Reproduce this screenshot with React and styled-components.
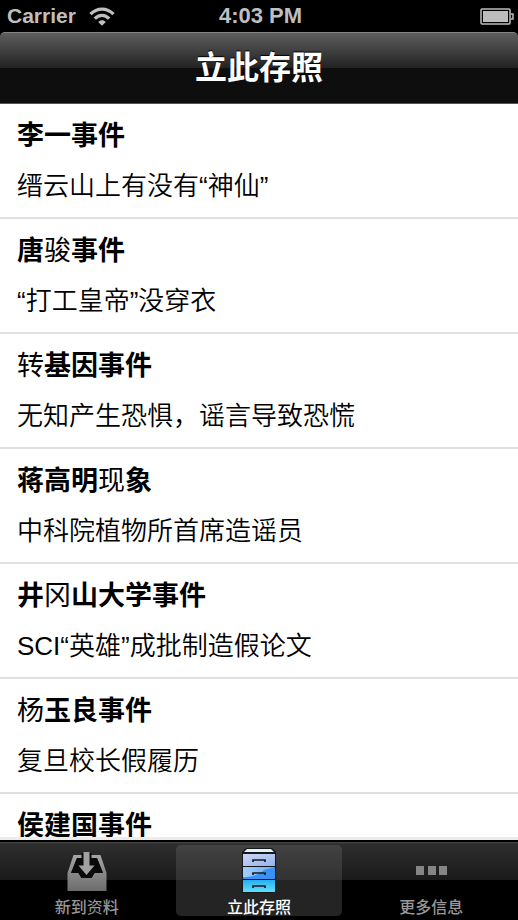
import styled, { createGlobalStyle } from 'styled-components';

const events = [
  { title: '李一事件', thin: '', desc: '缙云山上有没有“神仙”' },
  { title: '唐骏事件', thin: '骏', desc: '“打工皇帝”没穿衣' },
  { title: '转基因事件', thin: '转', desc: '无知产生恐惧，谣言导致恐慌' },
  { title: '蒋高明现象', thin: '现', desc: '中科院植物所首席造谣员' },
  { title: '井冈山大学事件', thin: '冈', desc: 'SCI“英雄”成批制造假论文' },
  { title: '杨玉良事件', thin: '杨', desc: '复旦校长假履历' },
  { title: '侯建国事件', thin: '', desc: '' },
];

const WifiIcon = () => (
  <svg width="26" height="19" viewBox="0 0 26 19" fill="none" stroke="#bfbfbf" strokeWidth="3.2" aria-hidden="true">
    <path d="M1.500 7.200C8 .4 18 .4 24.500 7.200" />
    <path d="M5.800 11.700C10 7.200 16 7.200 20.200 11.700" />
    <path d="M13 18.800L9.200 15C11.300 12.700 14.700 12.700 16.800 15Z" fill="#bfbfbf" stroke="none" />
  </svg>
);

const BatteryIcon = () => (
  <svg width="34" height="17" viewBox="0 0 34 17" aria-hidden="true">
    <rect x="1" y="1" width="29" height="15" rx="1" fill="none" stroke="#bdbdbd" strokeWidth="1.500" />
    <rect x="3" y="3" width="25" height="11" fill="#bdbdbd" />
    <path d="M30.500 6H33V11H30.500" fill="none" stroke="#bdbdbd" strokeWidth="1.500" />
  </svg>
);

const InboxIcon = () => (
  <svg width="40" height="40" viewBox="0 0 40 40" aria-hidden="true">
    <defs>
      <linearGradient id="inbox" x1="0" y1="0" x2="0" y2="1">
        <stop offset="0" stopColor="#a6a6a6" />
        <stop offset="1" stopColor="#6c6c6c" />
      </linearGradient>
    </defs>
    <path
      fill="url(#inbox)"
      fillRule="evenodd"
      d="M6.500 4H33.500L39.500 22V40H.5V22ZM10 7L4 22H11.500L14.500 27H24.500L27.500 22H36L30 7Z"
    />
    <path d="M10 7L4 22H11.500L14.500 27H24.500L27.500 22H36L30 7Z" fill="#0a0a0a" />
    <path d="M14.500 2V14H8.500L19.500 26L30.500 14H24.500V2Z" fill="#0a0a0a" />
    <path fill="#a0a0a0" d="M16.500 1H22.500V14.500H27.500L19.500 24L11.500 14.500H16.500Z" />
  </svg>
);

const CabinetIcon = () => (
  <svg width="40" height="46" viewBox="0 0 40 46" aria-hidden="true">
    <defs>
      <linearGradient id="drawer1" x1="0" y1="0" x2="1" y2="1">
        <stop offset="0" stopColor="#cdd6f4" />
        <stop offset="1" stopColor="#93b4ee" />
      </linearGradient>
      <linearGradient id="drawer2" x1="0" y1="0" x2="1" y2="0">
        <stop offset="0" stopColor="#a5cdf8" />
        <stop offset="1" stopColor="#68aef8" />
      </linearGradient>
      <linearGradient id="drawer3" x1="0" y1="0" x2="0" y2="1">
        <stop offset="0" stopColor="#29aef0" />
        <stop offset="1" stopColor="#61e0fb" />
      </linearGradient>
    </defs>
    <path d="M7 0H33L37 4V45H3V4Z" fill="#151719" />
    <path d="M8 1H32L35 4H5Z" fill="#dff3fa" />
    <rect x="4" y="6" width="32" height="12" fill="url(#drawer1)" />
    <rect x="4" y="19" width="32" height="12" fill="url(#drawer2)" />
    <path d="M4 31V29C14 29 21 26 25 22L36 19V31Z" fill="#3a90f3" />
    <rect x="4" y="32" width="32" height="12" fill="url(#drawer3)" />
    <path d="M14 14V12H26V14M14 27V25H26V27M14 40V38H26V40" fill="none" stroke="#171b20" strokeWidth="1.700" />
  </svg>
);

const MoreIcon = () => (
  <svg width="34" height="12" viewBox="0 0 34 12" aria-hidden="true">
    <path d="M2 1H10V10H2ZM14 1H22V10H14ZM25 1H33V10H25Z" fill="#858585" />
  </svg>
);

const tabs = [
  { label: '新到资料', thin: '资', icon: <InboxIcon /> },
  { label: '立此存照', thin: '', icon: <CabinetIcon />, active: true },
  { label: '更多信息', thin: '', icon: <MoreIcon /> },
];

// characters listed in thin are drawn in the regular weight
const MixedText = ({ text, thin }) =>
  [...text].map((char, i) => (thin.includes(char) ? <Thin key={i}>{char}</Thin> : char));

const App = () => {
  return <Screen lang="zh-CN">
    <GlobalStyle />
    <StatusBar>
      <Carrier>Carrier <WifiIcon /></Carrier>
      <time>4:03 PM</time>
      <Battery><BatteryIcon /></Battery>
    </StatusBar>
    <Header>
      <h1>立此存照</h1>
    </Header>
    <List>
      {events.map(({ title, thin, desc }) => (
        <Row key={title}>
          <a href="#event">
            <h2><MixedText text={title} thin={thin} /></h2>
            <p>{desc}</p>
          </a>
        </Row>
      ))}
    </List>
    <TabBar>
      {tabs.map(({ label, thin, icon, active }) => (
        <Tab key={label} type="button" $active={active} aria-current={active ? 'page' : undefined}>
          <TabIcon>{icon}</TabIcon>
          <span><MixedText text={label} thin={thin} /></span>
        </Tab>
      ))}
    </TabBar>
  </Screen>
}

const GlobalStyle = createGlobalStyle`
* {
  box-sizing: border-box;
}
body{
  margin: 0;
  background: black;
  font-family: "Liberation Sans", "Noto Sans CJK SC", sans-serif;
}
h1, h2, p{
  margin: 0;
}
`

const Screen = styled.div`
height: 100vh;
display: flex;
flex-direction: column;
overflow: hidden;
`

const StatusBar = styled.div`
flex: none;
display: grid;
grid-template-columns: 1fr auto 1fr;
align-items: center;
height: 32px;
padding: 0 4px 0 7px;
background: black;
color: #bfbfbf;
font-size: 21px;
font-weight: 700;
time{
  font-size: 22px;
}
`

const Carrier = styled.div`
display: flex;
align-items: center;
gap: 13px;
`

const Battery = styled.div`
display: flex;
justify-content: flex-end;
`

const Header = styled.header`
flex: none;
display: flex;
align-items: center;
justify-content: center;
height: 72px;
border-top: 1px solid #868686;
border-bottom: 1px solid #555;
border-radius: 5px 5px 0 0;
background: linear-gradient(#5e5e5e, #222 50%, #0e0e0e 50%, #0e0e0e);
h1{
  color: white;
  font-size: 32px;
  line-height: 40px;
  font-weight: 700;
  text-shadow: 0 -1px 1px black;
}
`

const List = styled.ul`
flex: 1;
min-height: 0;
margin: 0;
padding: 0;
overflow: hidden;
list-style: none;
background: white;
border-bottom: 3px solid #ececec;
`

const Row = styled.li`
border-bottom: 2px solid #e0e0e0;
a{
  display: flex;
  flex-direction: column;
  gap: 14px;
  height: 113px;
  padding: 14px 17px 0;
  color: black;
  text-decoration: none;
}
h2{
  font-size: 27px;
  line-height: 36px;
  font-weight: 700;
}
p{
  font-size: 26px;
  line-height: 36px;
  font-weight: 350;
}
`

const Thin = styled.span`
font-weight: 400;
`

const TabBar = styled.nav`
flex: none;
display: grid;
grid-template-columns: repeat(3, 1fr);
gap: 7px;
height: 80px;
padding: 3px 4px 4px;
border-top: 2px solid black;
background: linear-gradient(#454545, #2e2e2e 2px, #1a1a1a 38px, black 38px, black);
`

const Tab = styled.button`
display: flex;
flex-direction: column;
align-items: center;
padding: 2px 0 0;
border: none;
border-radius: 5px;
background: ${({ $active }) => ($active ? 'linear-gradient(#424242, #323232 35px, #242424 35px, #242424)' : 'none')};
color: ${({ $active }) => ($active ? 'white' : '#989898')};
font-family: inherit;
font-size: 16px;
line-height: 16px;
font-weight: 500;
cursor: pointer;
`

const TabIcon = styled.span`
display: flex;
align-items: center;
justify-content: center;
height: 48px;
margin-bottom: 5px;
`

export default App;
